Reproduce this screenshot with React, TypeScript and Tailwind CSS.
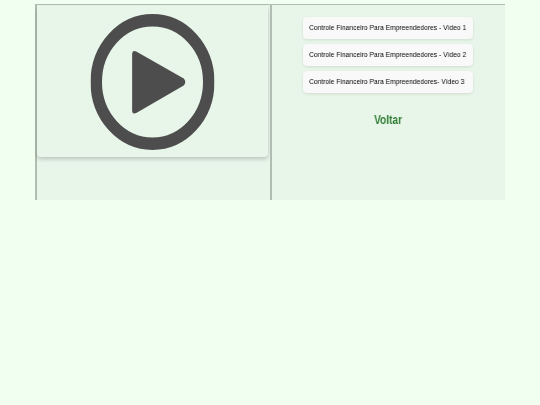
const videos = [
  'Controle Financeiro Para Empreendedores - Vídeo 1',
  'Controle Financeiro Para Empreendedores - Vídeo 2',
  'Controle Financeiro Para Empreendedores- Vídeo 3',
];

export default function App() {
  return (
    <div className="min-h-[405px] bg-[#f0fff0] px-[35px] pt-[4px] font-['Liberation_Sans',Arial,sans-serif]">
      <div className="grid h-[196px] grid-cols-[235px_235px] overflow-hidden bg-[#e8f5e9]">
        {/* Player */}
        <div className="border-t border-l-2 border-[#b0bdb0] pt-px pr-[2px]">
          <div className="flex h-[151px] items-center justify-center rounded-b-[4px] bg-[#e8f5e9] shadow-[0_2px_4px_rgba(0,0,0,0.2)]">
            <svg width="124" height="136" viewBox="0 0 137 137" preserveAspectRatio="none" className="mt-[1px] -translate-x-[0.5px]">
              <circle cx="68.5" cy="68.5" r="62.15" fill="none" stroke="#4d4d4d" strokeWidth="12.7" />
              <path
                d="M46 41 Q46 35.5 51 38 L103 65 Q106.5 68.5 103 72 L51 99.5 Q46 102 46 97 Z"
                fill="#4d4d4d"
              />
            </svg>
          </div>
        </div>

        {/* Video list */}
        <div className="flex flex-col border-t border-l-2 border-[#b0bdb0] pt-[12px] pl-[31px]">
          <div className="flex flex-col gap-[5px]">
            {videos.map((video) => (
              <button
                key={video}
                className="flex h-[22px] w-[170px] items-center rounded-[4px] bg-[#f9f9f9] pl-[6px] text-left whitespace-nowrap text-black shadow-[0_1px_3px_rgba(0,0,0,0.1)]"
              >
                <span className="origin-left scale-x-[0.84] text-[8px] will-change-transform">{video}</span>
              </button>
            ))}
          </div>
          <a className="mt-[20px] w-[170px] scale-x-[0.84] text-center text-[12px] leading-[14px] font-bold text-[#2e7d32] will-change-transform">Voltar</a>
        </div>
      </div>
    </div>
  );
}
